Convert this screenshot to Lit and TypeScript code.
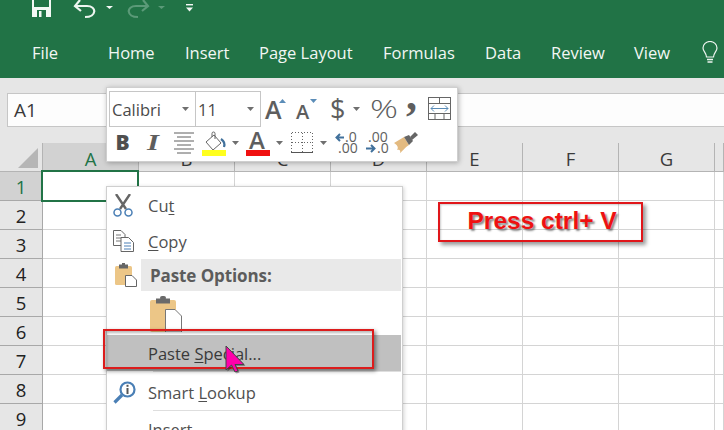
import { LitElement, html, css } from "lit";
import { customElement } from "lit/decorators.js";

const COLS = ["A", "B", "C", "D", "E", "F", "G", ""];
const ROWS = [1, 2, 3, 4, 5, 6, 7, 8, 9];
const TABS = ["File", "Home", "Insert", "Page Layout", "Formulas", "Data", "Review", "View"];

const caret = (c = "#6f6f6f") => html`<svg width="7" height="4" viewBox="0 0 7 4"><path d="M0 0H7L3.5 4Z" fill=${c}/></svg>`;
const T = "font-family:'Open Sans','Liberation Sans',sans-serif";

@customElement("app-root")
export class AppRoot extends LitElement {
  static styles = css`
    :host { display: block; width: 724px; height: 430px; overflow: hidden; position: relative; background: #fff;
      font-family: "Open Sans", "Liberation Sans", sans-serif; }
    .ribbon { height: 78px; background: #217346; color: #f2f7f4; box-sizing: border-box; }
    .qat { height: 32px; display: flex; align-items: flex-start; padding-left: 32px; }
    .qat svg { display: block; flex: none; }
    .tabs { display: flex; align-items: center; height: 40px; padding-left: 32px; font-size: 16.5px; }
    .tab { flex: none; white-space: nowrap; }
    .t0 { width: 76px; } .t1 { width: 77px; } .t2 { width: 74px; } .t3 { width: 124px; }
    .t4 { width: 102px; } .t5 { width: 66px; } .t6 { width: 83px; } .t7 { width: 68px; }
    .bulb { display: block; flex: none; }
    .fbar { height: 65px; background: #e6e6e6; box-sizing: border-box; padding: 15px 0 16px 7px; }
    .fbox { height: 34px; box-sizing: border-box; background: #fdfdfd; border: 1px solid #c6c6c6; border-right: 0; border-width: 1.5px 0 1.5px 1.5px;
      display: flex; align-items: center; padding-left: 6px; font-size: 19px; color: #3a3a3a; }
    .sheet { display: grid; grid-template-columns: 43px repeat(6, 96px) 96px 9px; grid-auto-rows: 29px; }
    .cell { box-sizing: border-box; border-right: 1px solid #d4d4d4; border-bottom: 1px solid #d4d4d4; background: #fff; }
    .ch { background: #e6e6e6; border-right: 1px solid #b4b4b4; border-bottom: 1px solid #b4b4b4; display: flex; align-items: center; justify-content: center;
      font-size: 18.5px; color: #3a3a3a; padding-top: 2px; box-sizing: border-box; }
    .ch.on { background: #d2d2d2; color: #217346; }
    .corner { background: #e6e6e6; border-right: 1px solid #b4b4b4; border-bottom: 1px solid #b4b4b4; padding: 5px 0 0 18px; box-sizing: border-box; }
    .corner svg { display: block; }
    .rh { background: #e6e6e6; border-right: 1px solid #a8a8a8; border-bottom: 1px solid #a8a8a8; display: flex; align-items: center; justify-content: center;
      font-size: 18.5px; color: #222; box-sizing: border-box; }
    .rh.on { background: #d2d2d2; color: #217346; }
    .sel { position: absolute; left: 41px; top: 170px; width: 98px; height: 32px; box-sizing: border-box; border: 2px solid #217346; }

    .mini { position: absolute; left: 106px; top: 87px; width: 352px; height: 75px; box-sizing: border-box; background: #fff; border: 1px solid #cfcfcf;
      box-shadow: 1px 1px 5px rgba(0,0,0,.28); padding: 3px 0 0 2px; }
    .r1 { display: grid; grid-template-columns: 87px 65px 4px 31px 34px 23px 17px 35px 23px 23px; height: 36px; align-items: center; }
    .r2 { display: grid; grid-template-columns: 30px 26px 29px 30px 14px 30px 15px 29px 15px 31px 28px 23px; height: 32px; align-items: center; padding-left: 8px; }
    .r1 svg, .r2 svg { display: block; overflow: visible; }
    .combo { height: 36px; box-sizing: border-box; border: 1px solid #c6c6c6; display: flex; align-items: center; justify-content: space-between;
      padding: 0 6px 0 2px; font-size: 16.5px; color: #4a4a4a; }
    .combo + .combo { border-left: 0; }

    .menu { position: absolute; left: 106px; top: 186px; width: 297px; height: 260px; box-sizing: border-box; background: #fff; border: 1px solid #cfcfcf;
      box-shadow: 1px 1px 4px rgba(0,0,0,.18); padding: 0 1px 0 0; font-size: 16.5px; color: #505050; }
    .item { display: flex; align-items: center; height: 36px; }
    .ic { width: 41px; flex: none; display: flex; justify-content: flex-start; padding-left: 6px; box-sizing: border-box; }
    .ic svg { display: block; }
    .item u { text-underline-offset: 2px; text-decoration-thickness: 1px; }
    .head { display: flex; height: 32px; }
    .head .ic { align-items: center; width: 34px; padding-left: 8px; }
    .head b { flex: 1; background: #e9e9e9; display: flex; align-items: center; padding-left: 9px; font-weight: 700; font-size: 17px; color: #5c5c5c; letter-spacing: -0.1px; }
    .opts { height: 44px; padding: 5px 0 0 43px; box-sizing: border-box; }
    .opts svg { display: block; }
    .hot { background: #c0c0c0; color: #3a3a3a; }
    .sep { height: 1px; background: #dedede; margin-left: 46px; }
    .sp4 { height: 2px; }

    .redbox { position: absolute; left: 103px; top: 329px; width: 271px; height: 40px; box-sizing: border-box; border: 2.5px solid #dc1c1c;
      box-shadow: 2px 2px 4px rgba(0,0,0,.45), inset 2px 2px 3px rgba(0,0,0,.28); }
    .cursor { position: absolute; left: 222px; top: 344px; display: block; }
    .press { position: absolute; left: 438px; top: 202px; width: 205px; height: 40px; box-sizing: border-box; border: 2.5px solid #e0161a; background: transparent;
      box-shadow: 3px 3px 4px rgba(0,0,0,.4), inset 1px 1px 2px rgba(0,0,0,.2); display: flex; align-items: center; padding: 0 0 3px 27.5px;
      font-family: "Liberation Sans", Arial, sans-serif; font-weight: 700; font-size: 24.5px; color: #ee1111; text-shadow: 2px 2px 2px rgba(0,0,0,.45); white-space: nowrap; }
  `;

  private qat() {
    return html`
      <svg width="170" height="20" viewBox="0 0 170 20">
        <path fill="#f4f8f5" fill-rule="evenodd" d="M0 0H19V17H0Z M2 0V7H17V0Z M5 10V17H14V10Z"/>
        <rect x="7" y="11" width="2.5" height="6" fill="#f4f8f5"/>
        <path d="M48 0L43 6L49 11M44 6H55C65 6 65 17 53 17" fill="none" stroke="#eef5f0" stroke-width="2.2"/>
        <path d="M74 6H81L77.5 9Z" fill="#f4f8f5"/>
        <path d="M111 0L116 6L110 11M115 6H104C94 6 94 17 106 17" fill="none" stroke="#5b9a78" stroke-width="2.2"/>
        <path d="M126 6H133L129.5 9Z" fill="#5b9a78"/>
        <rect x="154" y="4" width="7" height="1.4" fill="#f4f8f5"/>
        <path d="M154 7.5H161L157.5 11.5Z" fill="#f4f8f5"/>
      </svg>`;
  }

  private row1() {
    const gray = "#5e5e5e";
    return html`
      <div class="r1">
        <div class="combo"><span>Calibri</span>${caret()}</div>
        <div class="combo"><span>11</span>${caret()}</div>
        <span></span>
        <svg width="24" height="28" viewBox="0 0 24 28"><text x="0" y="24" style=${T} font-size="25" font-weight="600" fill=${gray}>A</text><path d="M14 8L17.500 4L21 8Z" fill="#5b8db8"/></svg>
        <svg width="24" height="28" viewBox="0 0 24 28"><text x="0" y="24" style=${T} font-size="20" font-weight="600" fill=${gray}>A</text><path d="M14 4H21L17.500 8Z" fill="#5b8db8"/></svg>
        <svg width="16" height="28" viewBox="0 0 16 28"><text x="0" y="23.500" style=${T} font-size="27" fill=${gray}>$</text></svg>
        <div>${caret()}</div>
        <svg width="30" height="28" viewBox="0 0 30 28"><text x="0" y="23" style=${T} font-size="25" font-weight="300" textLength="28" lengthAdjust="spacingAndGlyphs" fill=${gray}>%</text></svg>
        <svg width="12" height="28" viewBox="0 0 12 28"><text x="1" y="15" style="font-family:'Liberation Serif',serif" font-size="44" font-weight="700" fill=${gray}>,</text></svg>
        <svg width="23" height="24" viewBox="0 0 23 24">
          <rect x=".5" y=".5" width="22" height="22" fill="#fff" stroke="#666"/>
          <path d="M1 6.5H22M1 16.5H22M11.5 1V6M7 17V22M16 17V22" stroke="#666" fill="none"/>
          <path d="M3 11.5H20" stroke="#5b8db8" fill="none"/><path d="M6 8.5L3 11.5L6 14.5M17 8.5L20 11.5L17 14.5" stroke="#5b8db8" fill="none"/>
        </svg>
      </div>`;
  }

  private row2() {
    const gray = "#5e5e5e";
    return html`
      <div class="r2">
        <svg width="16" height="22" viewBox="0 0 16 22"><text x="-1.500" y="18" style=${T} font-size="21" font-weight="800" fill="#4f4f4f">B</text></svg>
        <svg width="16" height="22" viewBox="0 0 16 22"><text x="0" y="18" style="font-family:'Liberation Serif',serif" font-size="24" font-weight="700" font-style="italic" textLength="12" lengthAdjust="spacingAndGlyphs" fill=${gray}>I</text></svg>
        <svg width="22" height="22" viewBox="0 0 22 22"><path d="M1 1H21M4 5H18M1 9H21M4 13H18M1 17H21M4 21H18" stroke=${gray} fill="none" stroke-width="1"/></svg>
        <svg width="24" height="25" viewBox="0 0 24 25">
          <path d="M4 11L12 4L19 12L11 19Z" fill="#fff" stroke="#666"/><path d="M10 6V2.5A1.5 1.5 0 0 1 13 2.5V8" fill="none" stroke="#666"/>
          <path d="M19 8C22 10 23 13 22 16" fill="none" stroke="#41719c" stroke-width="2.2"/>
          <rect x="0" y="19" width="24" height="6" fill="#ffff1e"/>
        </svg>
        <div>${caret()}</div>
        <svg width="24" height="25" viewBox="0 0 24 25">
          <text x="3" y="18" style=${T} font-size="24" font-weight="600" fill=${gray}>A</text>
          <rect x="0" y="19" width="24" height="6" fill="#f01010"/>
        </svg>
        <div>${caret()}</div>
        <svg width="22" height="22" viewBox="0 0 22 22" shape-rendering="crispEdges">
          <path d="M.5 .5H21.5V20M.5 .5V20M11 .5V20M.5 10.5H21.5" fill="none" stroke="#666" stroke-dasharray="1 2"/>
          <path d="M0 20.5H22" stroke="#555" stroke-width="1"/>
        </svg>
        <div>${caret()}</div>
        <svg width="24" height="22" viewBox="0 0 24 22">
          <path d="M9 5.500H2M5 2L1.500 5.500L5 9" fill="none" stroke="#41719c" stroke-width="2"/>
          <text x="10" y="10" style=${T} font-size="14" fill=${gray}>.0</text>
          <text x="3" y="21" style=${T} font-size="14" fill=${gray}>.00</text>
        </svg>
        <svg width="24" height="22" viewBox="0 0 24 22">
          <text x="2" y="10" style=${T} font-size="14" fill=${gray}>.00</text>
          <path d="M0 16.500H8M5 13L8.500 16.500L5 20" fill="none" stroke="#41719c" stroke-width="2"/>
          <text x="11" y="21" style=${T} font-size="14" fill=${gray}>.0</text>
        </svg>
        <svg width="24" height="22" viewBox="0 0 24 22">
          <path d="M0 11L10 5L15 13C11 15 8 20 6 21C7 18 5 17 3 18C5 15 3 13 0 11Z" fill="#e3ba80"/>
          <path d="M10 5L15 13L19 9L15 3Z" fill="#666"/><path d="M16 5L21 0L24 3L18 8Z" fill="#666"/>
        </svg>
      </div>`;
  }

  render() {
    return html`
      <div class="ribbon">
        <div class="qat">${this.qat()}</div>
        <div class="tabs">
          ${TABS.map((t, i) => html`<div class="tab t${i}">${t}</div>`)}
          <svg class="bulb" width="16" height="23" viewBox="0 0 16 23" fill="none" stroke="#eef5f0" stroke-width="1.2">
            <path d="M4.5 16C4.5 12 1 10.500 1 7A7 6.500 0 0 1 15 7C15 10.500 11.500 12 11.500 16Z"/>
            <path d="M5 18.500H11M5.500 21H10.500" stroke-width="1.600"/>
          </svg>
        </div>
      </div>
      <div class="fbar"><div class="fbox">A1</div></div>
      <div class="sheet">
        <div class="corner"><svg width="20" height="20" viewBox="0 0 20 20"><path d="M20 0V20H0Z" fill="#b6b6b6"/></svg></div>
        ${COLS.map((c) => html`<div class="ch ${c === "A" ? "on" : ""}">${c}</div>`)}
        ${ROWS.map((r) => html`
          <div class="rh ${r === 1 ? "on" : ""}">${r}</div>
          ${COLS.map(() => html`<div class="cell"></div>`)}
        `)}
      </div>
      <div class="sel"></div>

      <div class="mini">${this.row1()}${this.row2()}</div>

      <div class="menu">
        <div class="item">
          <div class="ic"><svg width="21" height="23" viewBox="0 0 21 23">
            <path d="M3 0L13 15M17 0L7 15" stroke="#666" stroke-width="2.4" fill="none"/>
            <circle cx="4.500" cy="18.500" r="3.500" fill="none" stroke="#4a7fb5" stroke-width="1.500"/><circle cx="15.500" cy="18.500" r="3.500" fill="none" stroke="#4a7fb5" stroke-width="1.500"/>
          </svg></div><span>Cu<u>t</u></span>
        </div>
        <div class="item">
          <div class="ic"><svg width="21" height="22" viewBox="0 0 21 22" fill="#fff" stroke="#666">
            <path d="M.5 .5H8L12 4.500V15.500H.5Z"/><path d="M3 5H8M3 8H9M3 11H9" stroke="#777"/>
            <path d="M8 7.500H15.500L20.500 12.500V21.500H8Z"/><path d="M11 13H18M11 16H18M11 19H18" stroke="#4a7fb5"/>
          </svg></div><span><u>C</u>opy</span>
        </div>
        <div class="head">
          <div class="ic"><svg width="22" height="24" viewBox="0 0 22 24">
            <rect x="0" y="3" width="17" height="19" rx="1.500" fill="#ecc687"/><rect x="4" y="1.500" width="9" height="4" fill="#666"/><rect x="7" y="0" width="3" height="3" fill="#666"/>
            <path d="M10.500 12.500H17L21.500 17V23.500H10.500Z" fill="#fff" stroke="#666"/>
          </svg></div>
          <b>Paste Options:</b>
        </div>
        <div class="opts"><svg width="32" height="36" viewBox="0 0 32 36">
          <rect x="0" y="4" width="26" height="32" rx="2" fill="#ecc687"/><rect x="6" y="2.500" width="14" height="5" fill="#6a6a6a"/><rect x="10" y="0" width="6" height="4" rx="2" fill="#6a6a6a"/>
          <path d="M15.500 13.500H25L31.500 20V36H15.500Z" fill="#fff" stroke="#777"/>
        </svg></div>
        <div class="item hot"><div class="ic"></div><span>Paste <u>S</u>pecial...</span></div>
        <div class="sep"></div>
        <div class="sp4"></div>
        <div class="item">
          <div class="ic"><svg width="23" height="23" viewBox="0 0 23 23">
            <circle cx="14.500" cy="8.500" r="7" fill="#fff" stroke="#4a7fb5" stroke-width="2.200"/>
            <path d="M9 14L1.500 21.500" stroke="#4a7fb5" stroke-width="3.200"/>
            <rect x="13.500" y="3.800" width="2" height="2" fill="#555"/><rect x="13.500" y="7" width="2" height="6" fill="#555"/>
          </svg></div><span>Smart <u>L</u>ookup</span>
        </div>
        <div class="sep"></div>
        <div class="item"><div class="ic"></div><span>Insert</span></div>
      </div>

      <div class="redbox"></div>
      <svg class="cursor" width="28" height="34" viewBox="0 0 28 34">
        <path d="M4 2V26L9.500 21L13 28L16 27L13 20.500H22Z" fill="rgba(0,0,0,.35)" transform="translate(1.500 1.500)"/>
        <path d="M4 2V26L9.500 21L13 28L16 27L13 20.500H22Z" fill="#ff00aa" stroke="#444" stroke-width="1"/>
      </svg>
      <div class="press">Press ctrl+ V</div>
    `;
  }
}
